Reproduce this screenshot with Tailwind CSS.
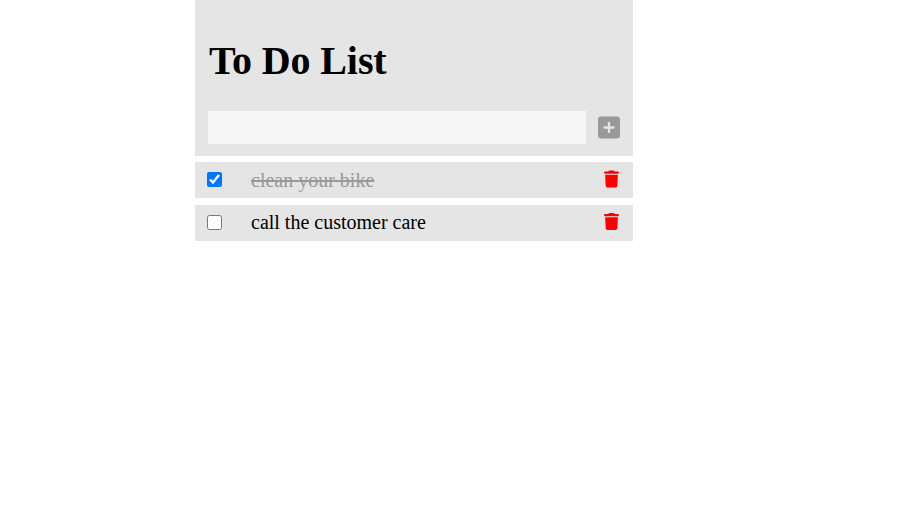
<!DOCTYPE html>
<html lang="en">
<head>
<meta charset="utf-8">
<title>To Do List</title>
<script src="https://cdn.jsdelivr.net/npm/@tailwindcss/browser@4"></script>
</head>
<body class="bg-white text-black font-['Liberation_Serif','Times_New_Roman',serif]">
<main class="ml-[195px] w-[438px]">
  <header class="h-[156px] bg-[#e5e5e5] px-[13px] pt-[38px]">
    <h1 class="h-[46px] pl-px text-[40px] leading-[46px] font-bold tracking-[-0.1px]">To Do List</h1>
    <form class="mt-[27px] flex items-center justify-between">
      <input type="text" aria-label="New task" class="h-[33px] w-[378px] bg-[#f7f7f7]">
      <button type="button" aria-label="Add">
        <svg class="block h-[23px] w-[22px]" viewBox="0 0 22 23"><rect y="0.5" width="22" height="22" rx="3" fill="#999"/><path d="M11 7v9M6.500 11.500h9" stroke="#e5e5e5" stroke-width="2.300" stroke-linecap="round"/></svg>
      </button>
    </form>
  </header>
  <ul>
    <li class="mt-1.5 flex h-9 items-center bg-[#e5e5e5] pl-3 pr-[14px]">
      <input type="checkbox" checked aria-label="Done" class="mb-0.5 size-[15px]">
      <span class="ml-[29px] flex-1 text-[20px] leading-9 text-[#999] line-through decoration-2">clean your bike</span>
      <svg class="mb-0.5 h-[18px] w-[15px]" viewBox="0 -15 448 542" fill="#f00"><path d="M135 18C141 7 152 0 164 0H284c12 0 23 7 29 18L320 32h96c18 0 32 14 32 32s-14 32-32 32H32C14 96 0 82 0 64S14 32 32 32h96zM32 128H416L400 448c-2 38-30 64-64 64H112c-34 0-62-26-64-64z"/></svg>
    </li>
    <li class="mt-[7px] flex h-9 items-center bg-[#e5e5e5] pl-3 pr-[14px]">
      <input type="checkbox" aria-label="Done" class="mb-0.5 size-[15px]">
      <span class="mb-0.5 ml-[29px] flex-1 text-[20px] leading-[34px]">call the customer care</span>
      <svg class="mb-[3px] h-[17px] w-[15px]" viewBox="0 0 448 512" fill="#f00"><path d="M135 18C141 7 152 0 164 0H284c12 0 23 7 29 18L320 32h96c18 0 32 14 32 32s-14 32-32 32H32C14 96 0 82 0 64S14 32 32 32h96zM32 128H416L400 448c-2 38-30 64-64 64H112c-34 0-62-26-64-64z"/></svg>
    </li>
  </ul>
</main>
</body>
</html>
